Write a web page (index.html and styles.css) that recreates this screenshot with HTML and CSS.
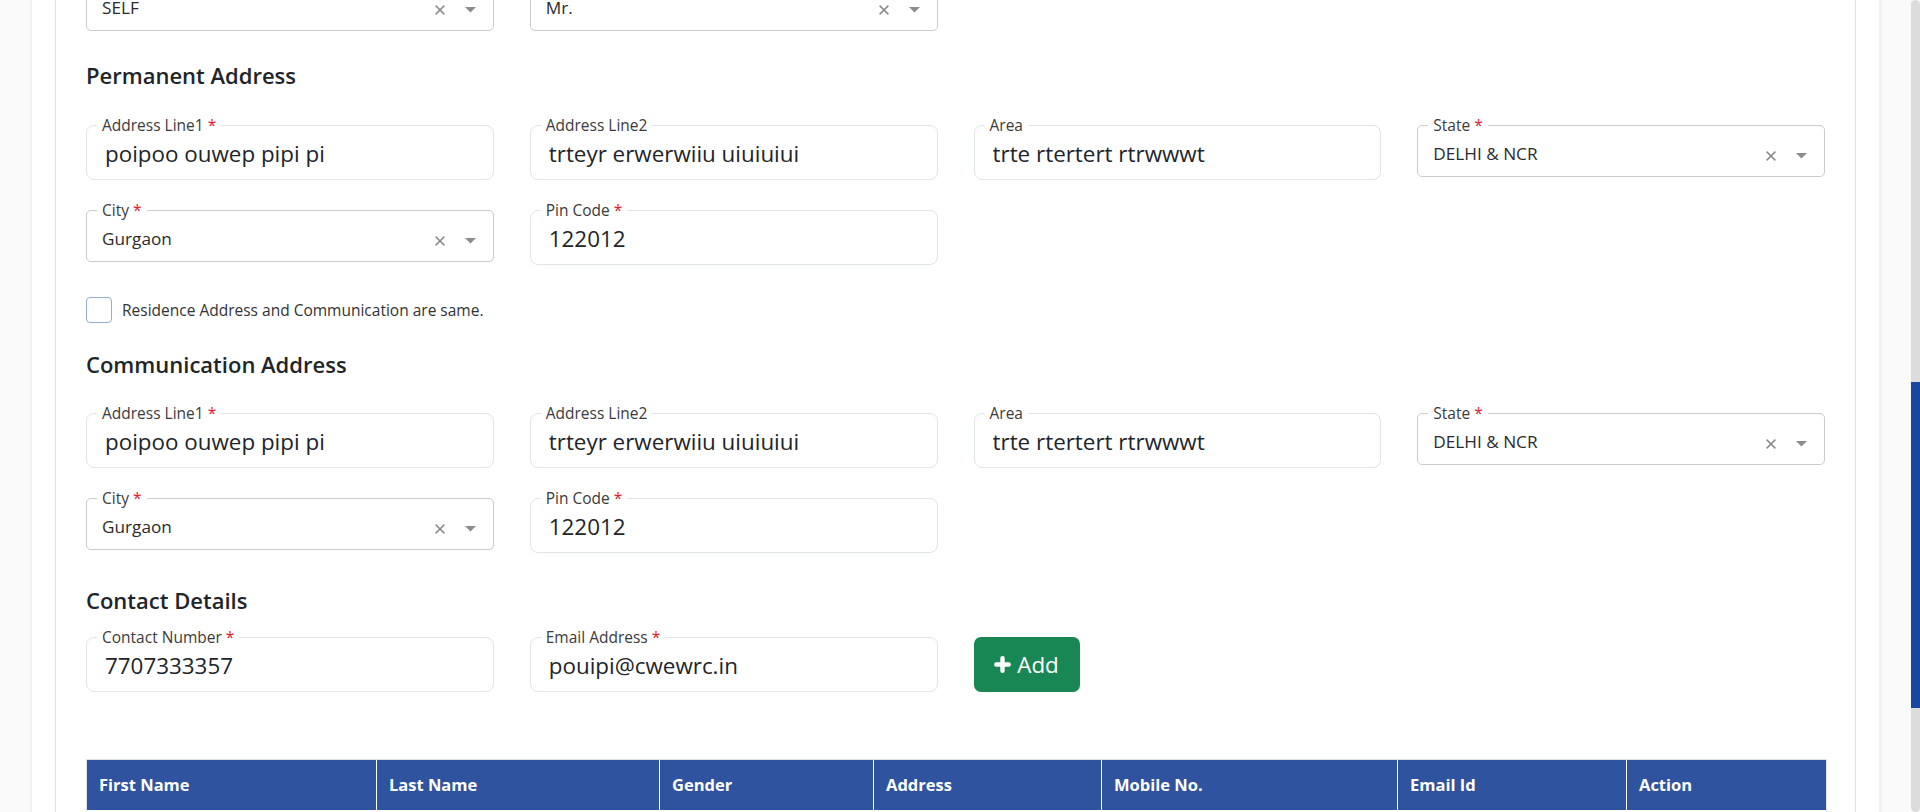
FILE: index.html
```html
<!DOCTYPE html>
<html lang="en">
<head>
<meta charset="utf-8">
<title>Address Details</title>
<link rel="stylesheet" href="styles.css">
</head>
<body>
<div class="viewport">
  <main class="page">
    <div class="card">
      <div class="grid">
        <fieldset class="field field-select">
          <legend>Relation <span class="req">*</span></legend>
          <div class="sel-row">
            <span class="sel-value">SELF</span>
            <span class="indicators">
              <svg class="ic-clear" width="10" height="10" viewBox="0 0 10 10"><path d="M0.6 0.6L9.4 9.4M9.4 0.6L0.6 9.4"/></svg>
              <svg class="ic-caret" width="11" height="6" viewBox="0 0 11 6"><path d="M0 0H11L5.5 5.5Z"/></svg>
            </span>
          </div>
        </fieldset>
        <fieldset class="field field-select">
          <legend>Title <span class="req">*</span></legend>
          <div class="sel-row">
            <span class="sel-value">Mr.</span>
            <span class="indicators">
              <svg class="ic-clear" width="10" height="10" viewBox="0 0 10 10"><path d="M0.6 0.6L9.4 9.4M9.4 0.6L0.6 9.4"/></svg>
              <svg class="ic-caret" width="11" height="6" viewBox="0 0 11 6"><path d="M0 0H11L5.5 5.5Z"/></svg>
            </span>
          </div>
        </fieldset>
      </div>

      <h5 class="section-title section-title-first">Permanent Address</h5>
      <div class="grid">
        <fieldset class="field">
          <legend>Address Line1 <span class="req">*</span></legend>
          <input class="field-input" type="text" value="poipoo ouwep pipi pi">
        </fieldset>
        <fieldset class="field">
          <legend>Address Line2</legend>
          <input class="field-input" type="text" value="trteyr erwerwiiu uiuiuiui">
        </fieldset>
        <fieldset class="field">
          <legend>Area</legend>
          <input class="field-input" type="text" value="trte rtertert rtrwwwt">
        </fieldset>
        <fieldset class="field field-select">
          <legend>State <span class="req">*</span></legend>
          <div class="sel-row">
            <span class="sel-value">DELHI &amp; NCR</span>
            <span class="indicators">
              <svg class="ic-clear" width="10" height="10" viewBox="0 0 10 10"><path d="M0.6 0.6L9.4 9.4M9.4 0.6L0.6 9.4"/></svg>
              <svg class="ic-caret" width="11" height="6" viewBox="0 0 11 6"><path d="M0 0H11L5.5 5.5Z"/></svg>
            </span>
          </div>
        </fieldset>
        <fieldset class="field field-select">
          <legend>City <span class="req">*</span></legend>
          <div class="sel-row">
            <span class="sel-value">Gurgaon</span>
            <span class="indicators">
              <svg class="ic-clear" width="10" height="10" viewBox="0 0 10 10"><path d="M0.6 0.6L9.4 9.4M9.4 0.6L0.6 9.4"/></svg>
              <svg class="ic-caret" width="11" height="6" viewBox="0 0 11 6"><path d="M0 0H11L5.5 5.5Z"/></svg>
            </span>
          </div>
        </fieldset>
        <fieldset class="field">
          <legend>Pin Code <span class="req">*</span></legend>
          <input class="field-input" type="text" value="122012">
        </fieldset>
      </div>

      <label class="check-row">
        <input class="checkbox" type="checkbox">
        <span>Residence Address and Communication are same.</span>
      </label>

      <h5 class="section-title section-title-comm">Communication Address</h5>
      <div class="grid">
        <fieldset class="field">
          <legend>Address Line1 <span class="req">*</span></legend>
          <input class="field-input" type="text" value="poipoo ouwep pipi pi">
        </fieldset>
        <fieldset class="field">
          <legend>Address Line2</legend>
          <input class="field-input" type="text" value="trteyr erwerwiiu uiuiuiui">
        </fieldset>
        <fieldset class="field">
          <legend>Area</legend>
          <input class="field-input" type="text" value="trte rtertert rtrwwwt">
        </fieldset>
        <fieldset class="field field-select">
          <legend>State <span class="req">*</span></legend>
          <div class="sel-row">
            <span class="sel-value">DELHI &amp; NCR</span>
            <span class="indicators">
              <svg class="ic-clear" width="10" height="10" viewBox="0 0 10 10"><path d="M0.6 0.6L9.4 9.4M9.4 0.6L0.6 9.4"/></svg>
              <svg class="ic-caret" width="11" height="6" viewBox="0 0 11 6"><path d="M0 0H11L5.5 5.5Z"/></svg>
            </span>
          </div>
        </fieldset>
        <fieldset class="field field-select">
          <legend>City <span class="req">*</span></legend>
          <div class="sel-row">
            <span class="sel-value">Gurgaon</span>
            <span class="indicators">
              <svg class="ic-clear" width="10" height="10" viewBox="0 0 10 10"><path d="M0.6 0.6L9.4 9.4M9.4 0.6L0.6 9.4"/></svg>
              <svg class="ic-caret" width="11" height="6" viewBox="0 0 11 6"><path d="M0 0H11L5.5 5.5Z"/></svg>
            </span>
          </div>
        </fieldset>
        <fieldset class="field">
          <legend>Pin Code <span class="req">*</span></legend>
          <input class="field-input" type="text" value="122012">
        </fieldset>
      </div>

      <h5 class="section-title section-title-contact">Contact Details</h5>
      <div class="grid">
        <fieldset class="field">
          <legend>Contact Number <span class="req">*</span></legend>
          <input class="field-input" type="text" value="7707333357">
        </fieldset>
        <fieldset class="field">
          <legend>Email Address <span class="req">*</span></legend>
          <input class="field-input" type="text" value="pouipi@cwewrc.in">
        </fieldset>
        <div class="btn-cell">
          <button class="btn-add" type="button">
            <svg class="ic-plus" width="17" height="17" viewBox="0 0 17 17"><path d="M8.5 2.3V14.7M2.3 8.5H14.7"/></svg>
            <span>Add</span>
          </button>
        </div>
      </div>

      <table class="contact-table">
        <colgroup>
          <col class="c1"><col class="c2"><col class="c3"><col class="c4"><col class="c5"><col class="c6"><col class="c7">
        </colgroup>
        <thead>
          <tr>
            <th>First Name</th>
            <th>Last Name</th>
            <th>Gender</th>
            <th>Address</th>
            <th>Mobile No.</th>
            <th>Email Id</th>
            <th>Action</th>
          </tr>
        </thead>
        <tbody>
          <tr><td colspan="7">&nbsp;</td></tr>
        </tbody>
      </table>
    </div>
  </main>
  <div class="scrollbar"><div class="thumb"></div></div>
</div>
</body>
</html>
```

FILE: styles.css
```css
* { box-sizing: border-box; }

html, body {
  margin: 0;
  height: 100%;
}

body {
  background: #fafafa;
  font-family: "Open Sans", "Noto Sans", Arial, sans-serif;
  color: #212529;
  overflow: hidden;
}

.viewport {
  display: flex;
  height: 812px;
}

.page {
  flex: 1;
  min-width: 0;
  margin: 0 29px 0 30px;
  padding: 0 23px;
  background: #fff;
  border-left: 2px solid #f1f1f1;
  border-right: 3px solid #f1f1f1;
  overflow: hidden;
}

.card {
  margin-top: -62px;
  padding: 30px;
  background: #fff;
  border: 1px solid #dee2e6;
  border-radius: 4px;
}

.scrollbar {
  width: 9px;
  background: #dcdcdc;
  border-radius: 5px;
}

.thumb {
  margin-top: 382px;
  height: 326px;
  background: #17479e;
}

.grid {
  display: grid;
  grid-template-columns: repeat(4, minmax(0, 1fr));
  column-gap: 36px;
  row-gap: 20px;
  align-items: start;
}

.field {
  margin: 0;
  min-width: 0;
  padding: 0 0 6px;
  border: 1px solid #e1e4e8;
  border-radius: 8px;
}

.field legend {
  margin-left: 10px;
  padding: 0 5px;
  font-size: 15.5px;
  line-height: 20px;
  color: #3b3b3b;
}

.req { color: #e0202e; }

.field-input {
  display: block;
  width: 100%;
  height: 38px;
  padding: 0 0 0 18px;
  border: none;
  outline: none;
  background: transparent;
  font-family: inherit;
  font-size: 22.4px;
  line-height: 38px;
  color: #212529;
}

.field-select {
  padding-bottom: 5px;
  border-color: #cccccc;
  border-radius: 5px;
}

.sel-row {
  display: flex;
  align-items: center;
  height: 36px;
  padding: 0 17px 0 15px;
}

.sel-value {
  flex: 1;
  font-size: 17.2px;
  color: #2b2b2b;
  white-space: nowrap;
}

.indicators {
  display: flex;
  align-items: center;
  gap: 20px;
  margin-top: 6px;
}

.ic-clear path {
  stroke: #8c8c8c;
  stroke-width: 1.5;
  fill: none;
}

.ic-caret path { fill: #8c8c8c; }

.section-title {
  margin: 34px 0 26px;
  font-size: 22px;
  font-weight: 600;
  line-height: 26px;
  color: #212529;
}

.section-title-first {
  margin-top: 31px;
  margin-bottom: 27px;
}

.section-title-comm { margin-top: 28px; }

.section-title-contact { margin-bottom: 14px; }

.check-row {
  display: flex;
  align-items: center;
  gap: 10px;
  margin-top: 32px;
  font-size: 15.5px;
  color: #333;
}

.checkbox {
  appearance: none;
  width: 26px;
  height: 26px;
  margin: 0;
  border: 1px solid #97abd8;
  border-radius: 4px;
  background: #fff;
}

.btn-cell {
  padding-top: 10px;
}

.btn-add {
  display: flex;
  align-items: center;
  justify-content: center;
  gap: 6px;
  width: 106px;
  height: 55px;
  padding: 0;
  border: none;
  border-radius: 7px;
  background: #198754;
  color: #fff;
  font-family: inherit;
  font-size: 22.4px;
}

.ic-plus path {
  stroke: #fff;
  stroke-width: 4.4;
  stroke-linecap: round;
  fill: none;
}

.contact-table {
  width: 100%;
  margin-top: 67px;
  table-layout: fixed;
  border-collapse: separate;
  border-spacing: 0;
  border: 1px solid #dee2e6;
}

.c1 { width: 289px; }
.c2 { width: 283px; }
.c3 { width: 214px; }
.c4 { width: 228px; }
.c5 { width: 296px; }
.c6 { width: 229px; }
.c7 { width: 200px; }

.contact-table th {
  padding: 13px 12px;
  background: #2f539e;
  color: #fff;
  font-size: 16.5px;
  font-weight: 700;
  line-height: 24px;
  text-align: left;
  border-left: 1px solid #fff;
}

.contact-table th:first-child { border-left: none; }

.contact-table td {
  height: 50px;
}
```
